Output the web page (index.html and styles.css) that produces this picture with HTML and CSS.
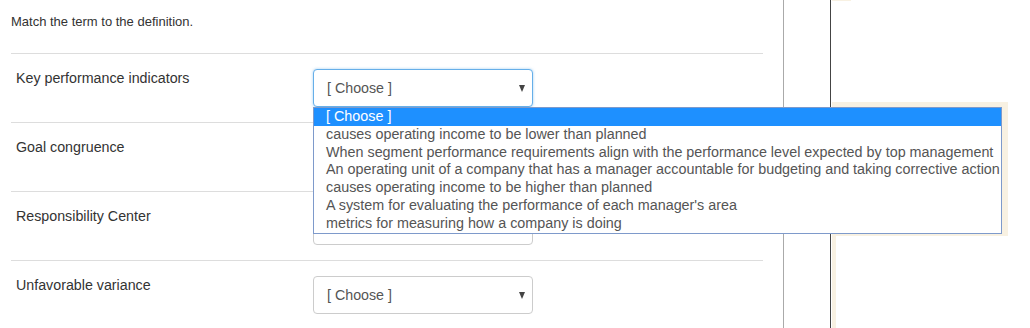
FILE: index.html
```html
<html>
  <head>
    <title>Matching</title>
    <link rel="stylesheet" href="styles.css">
  </head>

  <body>
    <div class="page">
      <div class="quiz">
        <p class="intro">Match the term to the definition.</p>

        <div class="match-row">
          <div class="term">Key performance indicators</div>
          <div class="picker">
            <div class="select is-focused"><span>[ Choose ]</span><i class="caret"></i></div>
            <ul class="options">
              <li class="is-active">[ Choose ]</li>
              <li>causes operating income to be lower than planned</li>
              <li>When segment performance requirements align with the performance level expected by top management</li>
              <li>An operating unit of a company that has a manager accountable for budgeting and taking corrective action</li>
              <li>causes operating income to be higher than planned</li>
              <li>A system for evaluating the performance of each manager's area</li>
              <li>metrics for measuring how a company is doing</li>
            </ul>
          </div>
        </div>

        <div class="match-row">
          <div class="term">Goal congruence</div>
          <div class="picker">
            <div class="select"><span>[ Choose ]</span><i class="caret"></i></div>
          </div>
        </div>

        <div class="match-row">
          <div class="term">Responsibility Center</div>
          <div class="picker">
            <div class="select"><span>[ Choose ]</span><i class="caret"></i></div>
          </div>
        </div>

        <div class="match-row">
          <div class="term">Unfavorable variance</div>
          <div class="picker">
            <div class="select"><span>[ Choose ]</span><i class="caret"></i></div>
          </div>
        </div>
      </div>

      <div class="gutter"></div>

      <div class="side">
        <div class="side-tab"></div>
        <div class="side-frame">
          <div class="side-head"></div>
        </div>
      </div>
    </div>
  </body>
</html>
```

FILE: styles.css
```css
* {
  margin: 0;
  padding: 0;
  box-sizing: border-box;
}

body {
  font-family: "Liberation Sans", Arial, sans-serif;
  color: #333;
  background: #fff;
  overflow: hidden;
}

.page {
  display: flex;
  height: 328px;
}

.quiz {
  width: 784px;
  padding-left: 11px;
  padding-right: 20px;
  border-right: 1px solid #aaa;
}

.intro {
  height: 53px;
  padding-top: 14px;
  font-size: 13px;
  line-height: 16px;
}

.match-row {
  display: grid;
  grid-template-columns: 302px 220px;
  height: 69px;
  border-top: 1px solid #ddd;
}

.term {
  padding-left: 5px;
  padding-top: 14px;
  font-size: 14.25px;
  line-height: 20px;
}

.picker {
  position: relative;
  padding-top: 15px;
}

.select {
  display: flex;
  align-items: center;
  justify-content: space-between;
  height: 38px;
  padding: 0 7px 0 13px;
  border: 1px solid #ccc;
  border-radius: 4px;
  font-size: 14.25px;
  color: #555;
  background: #fff;
}

.select.is-focused {
  border-color: #66afe9;
  box-shadow: 0 0 3px rgba(102, 175, 233, 0.6);
}

.caret {
  width: 0;
  height: 0;
  border-left: 3.5px solid transparent;
  border-right: 3.5px solid transparent;
  border-top: 7px solid #444;
}

.options {
  position: absolute;
  top: 53px;
  left: 0;
  z-index: 5;
  width: 689px;
  list-style: none;
  background: #fff;
  border: 1px solid #7e9acb;
  font-size: 14.35px;
  color: #555;
}

.options li {
  height: 17.8px;
  line-height: 17.8px;
  padding-left: 12px;
  white-space: nowrap;
}

.options li.is-active {
  background: #1e90ff;
  color: #fff;
}

.gutter {
  width: 47px;
  border-right: 1px solid #444;
}

.side {
  flex: 1;
  display: flex;
  flex-direction: column;
  padding-left: 1px;
}

.side-tab {
  width: 19px;
  height: 1px;
  background: #f8f1e2;
}

.side-frame {
  flex: 1;
  margin-top: 101px;
  border-left: 4px solid #f8f1e2;
}

.side-head {
  width: 172px;
  height: 134px;
  background: #f8f1e2;
}
```
